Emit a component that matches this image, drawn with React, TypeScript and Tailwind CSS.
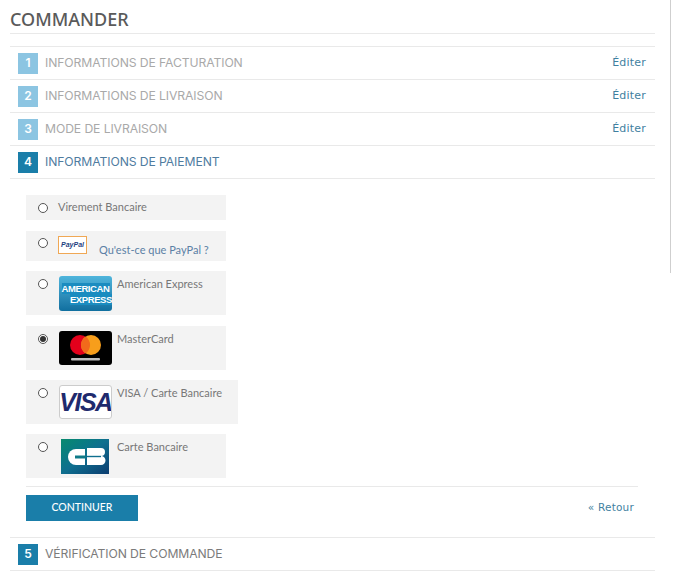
const head = '[font-family:Montserrat,Inter,"Liberation Sans",sans-serif]';

function Step({ n, label, state, edit }: { n: number; label: string; state: "done" | "active" | "next"; edit?: boolean }) {
  const square = state === "done" ? "bg-[#8cc5e2]" : "bg-[#1a7ea9]";
  const text = state === "done" ? "text-[#a9a9a9]" : state === "active" ? "text-[#4f7c9f]" : "text-[#7b7b7b]";
  return (
    <div className="flex items-center h-[33px] border-b border-[#e9e9e9] pl-[8px] pr-[9px]">
      <div className={`w-[20px] h-[21px] flex items-center justify-center text-white text-[12px] font-semibold font-['Inter',sans-serif] ${square}`}>{n}</div>
      <div className={`ml-[7px] text-[12.2px] tracking-[-0.1px] font-['Inter',sans-serif] ${text}`}>{label}</div>
      {edit && <div className="ml-auto text-[11px] tracking-[0.2px] text-[#3f7f9f] font-['DejaVu_Sans',sans-serif]">Éditer</div>}
    </div>
  );
}

function Radio({ checked }: { checked?: boolean }) {
  return (
    <span className="w-[10px] h-[10px] rounded-full border border-[#555] bg-white flex items-center justify-center shrink-0">
      {checked && <span className="w-[6px] h-[6px] rounded-full bg-[#333]" />}
    </span>
  );
}

function Amex() {
  return (
    <div className="w-[53px] h-[35px] rounded-[3px] bg-gradient-to-b from-[#4fb5dc] to-[#0f6f9f] flex flex-col items-center justify-center overflow-hidden font-['Liberation_Sans',sans-serif] font-bold text-white text-[9.5px] leading-[11px]">
      <span className="bg-[#1a8cc0] tracking-[-0.4px]">AMERICAN</span>
      <span className="self-end bg-[#1a8cc0] tracking-[-0.4px]">EXPRESS</span>
    </div>
  );
}

function Mastercard() {
  return (
    <div className="w-[53px] h-[34px] rounded-[3px] bg-black">
      <svg width="53" height="34" viewBox="0 0 53 34">
        <circle cx="21" cy="14" r="10" fill="#e3001b" />
        <circle cx="32" cy="14" r="10" fill="#f79e1b" />
        <path d="M26.5 5.6a10 10 0 0 1 0 16.8a10 10 0 0 1 0-16.8z" fill="#f26a1b" />
        <rect x="12" y="27" width="29" height="2.5" fill="#bdbdbd" rx="1" />
      </svg>
    </div>
  );
}

function Visa() {
  return (
    <div className="w-[53px] h-[34px] rounded-[3px] border border-[#ccc] bg-white flex items-center justify-center overflow-hidden">
      <span className="font-['Liberation_Sans',sans-serif] font-bold italic text-[#1f2a6d] text-[25px] tracking-[-1.5px] leading-none">VISA</span>
    </div>
  );
}

function Cb() {
  return (
    <div className="ml-[2px] w-[48px] h-[35px] bg-gradient-to-br from-[#0a8a6e] via-[#0f6f8f] to-[#0d3d70]">
      <svg width="48" height="35" viewBox="0 0 48 35">
        <path d="M24 10H15a7.5 7.5 0 0 0 0 16h9z" fill="#fff" />
        <path d="M14 16.5h11v3H14z" fill="#0f7a88" />
        <path d="M26 9h14a4 4 0 0 1 0 8a4 4 0 0 1 0 9H26z" fill="#fff" />
        <path d="M26 16.8h14v1.4H26z" fill="#0f6f8f" />
      </svg>
    </div>
  );
}

function Opt({ children, className }: { children: React.ReactNode; className: string }) {
  return <div className={`flex bg-[#f3f3f3] pl-[12px] text-[11px] text-[#777] font-['Lato',sans-serif] ${className}`}>{children}</div>;
}

function CardOpt({ logo, label, checked, wide, mt }: { logo: React.ReactNode; label: string; checked?: boolean; wide?: boolean; mt: string }) {
  return (
    <Opt className={`h-[44px] ${wide ? "w-[212px]" : "w-[200px]"} ${mt}`}>
      <div className="pt-[8px] w-[21px]"><Radio checked={checked} /></div>
      <div className="pt-[5px] w-[58px] shrink-0">{logo}</div>
      <div className="pt-[6px] leading-[14px] whitespace-nowrap">{label}</div>
    </Opt>
  );
}

export default function App() {
  return (
    <div className="relative w-[676px] h-[576px] bg-white overflow-hidden">
      <div className="absolute left-[670px] top-0 w-[1px] h-[273px] bg-[#cfcfcf]" />
      <div className="pl-[10px] pr-[21px] pt-[8px]">
        <h1 className={`${head} text-[18px] leading-[22px] font-medium text-[#5a5a5a] pb-[3px] border-b border-[#e9e9e9] h-[26px]`}>COMMANDER</h1>
        <div className="mt-[12px] border-t border-[#e9e9e9]">
          <Step n={1} label="INFORMATIONS DE FACTURATION" state="done" edit />
          <Step n={2} label="INFORMATIONS DE LIVRAISON" state="done" edit />
          <Step n={3} label="MODE DE LIVRAISON" state="done" edit />
          <Step n={4} label="INFORMATIONS DE PAIEMENT" state="active" />
        </div>
        <div className="pl-[16px] pr-[17px] pt-[16px]">
          <Opt className="w-[200px] h-[25px] items-center">
            <Radio />
            <span className="ml-[10px]">Virement Bancaire</span>
          </Opt>
          <Opt className="w-[200px] h-[30px] mt-[11px]">
            <div className="pt-[7px] w-[20px]"><Radio /></div>
            <div className="pt-[5px]">
              <div className="w-[29px] h-[18px] border border-[#f0a855] bg-white flex items-center justify-center text-[7px] font-bold italic font-['Liberation_Sans',sans-serif] text-[#1f3f7f]">PayPal</div>
            </div>
            <a className="ml-[12px] pt-[12px] leading-[14px] text-[#5b80a5] whitespace-nowrap">Qu'est-ce que PayPal ?</a>
          </Opt>
          <CardOpt logo={<Amex />} label="American Express" mt="mt-[10px]" />
          <CardOpt logo={<Mastercard />} label="MasterCard" checked mt="mt-[11px]" />
          <CardOpt logo={<Visa />} label="VISA / Carte Bancaire" wide mt="mt-[10px]" />
          <CardOpt logo={<Cb />} label="Carte Bancaire" mt="mt-[10px]" />
          <div className="mt-[8px] border-t border-[#e9e9e9] pt-[8px] flex items-center justify-between pr-[4px]">
            <div className="w-[112px] h-[26px] bg-[#1a7ea9] text-white text-[10.5px] font-['Lato',sans-serif] font-medium flex items-center justify-center">CONTINUER</div>
            <div className="text-[10.5px] text-[#3f7f9f] tracking-[0.2px] font-['DejaVu_Sans',sans-serif]">« Retour</div>
          </div>
        </div>
        <div className="mt-[16px] border-t border-[#e9e9e9]">
          <Step n={5} label="VÉRIFICATION DE COMMANDE" state="next" />
        </div>
      </div>
    </div>
  );
}
